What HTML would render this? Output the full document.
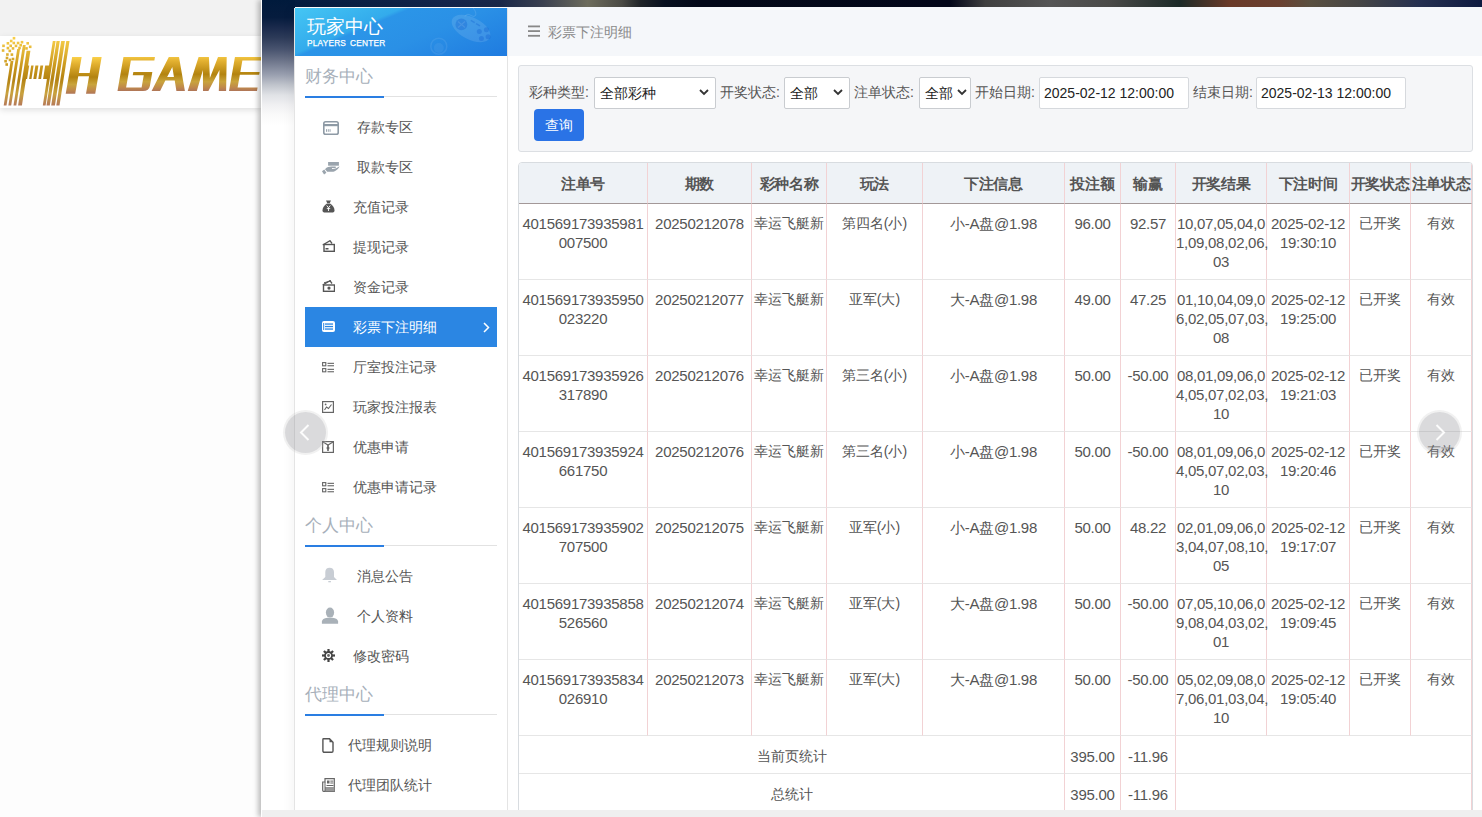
<!DOCTYPE html>
<html><head><meta charset="utf-8">
<style>
*{box-sizing:border-box;margin:0;padding:0}
html,body{width:1482px;height:817px;overflow:hidden;background:#fdfdfd;font-family:"Liberation Sans",sans-serif;color:#555}
.abs{position:absolute}
#topbg{left:0;top:0;width:261px;height:36px;background:#f2f2f2}
#logo{left:0;top:36px;width:261px;height:72px;background:#fff;box-shadow:0 2px 6px rgba(0,0,0,.12)}
#logosvg{left:0;top:0;width:261px;height:120px}
#panel{left:261px;top:0;width:1221px;height:817px;background:#fff;box-shadow:-3px 0 5px rgba(0,0,0,.25)}
#space{left:262px;top:0;width:1220px;height:7px;background:linear-gradient(90deg,#001a3c 0%,#14244a 15%,#1a2848 19.5%,#3a4050 23%,#6d6c5c 26.7%,#4a4a44 29.5%,#202428 31%,#081020 33%,#020818 36%,#03071a 56.4%,#404040 59.3%,#555555 64.6%,#4a4a48 69.5%,#1c2a28 75.2%,#6a3a28 79.3%,#6a4030 83.4%,#5a5040 85.9%,#454545 90%,#253050 94.9%,#0e1a40 100%)}
#lgrad{left:262px;top:0;width:33px;height:125px;background:linear-gradient(180deg,#001a3c 0%,#061c3e 14%,#1a2a4c 22%,#2c3a58 30%,#4a5570 40%,#6a7288 48%,#9aa0b0 60%,#c0c4cc 68%,#e0e2e6 76%,#f0f0f2 84%,#fafafa 92%,#fff 100%)}
#side{left:294px;top:8px;width:214px;height:809px;background:#fff;border-left:1px solid #e4e4e4;border-right:1px solid #e4e4e4;box-shadow:-4px 0 10px rgba(0,0,0,.035)}
#sidehead{left:295px;top:8px;width:212px;height:48px;overflow:hidden;background:linear-gradient(157deg,#45c6f4 0%,#33abec 33%,#2b95e8 36%,#2a90e6 60%,#1f7be0 100%)}
#sidehead .t1{position:absolute;left:12px;top:8px;font-size:19px;color:#fff;line-height:22px;letter-spacing:0px}
#sidehead .t2{position:absolute;left:12px;top:30px;font-size:8.3px;color:#fff;font-weight:normal;line-height:10px;letter-spacing:0.2px;word-spacing:1.5px;-webkit-text-stroke:0.25px #fff}
#crumb{left:508px;top:7px;width:974px;height:49px;background:#f5f7fa}
#crumb .txt{position:absolute;left:40px;top:16px;font-size:14px;color:#8a8a8a;line-height:18px}
#bottombar{left:262px;top:810px;width:1220px;height:7px;background:#efefef}
.sec{position:absolute;left:305px;width:192px;height:31px;border-bottom:1px solid #e2e2e2;font-size:17px;color:#a7b0ba;line-height:21px}
.sec:after{content:"";position:absolute;left:0;bottom:-2px;width:79px;height:2px;background:#2a7ee2}
.mi{position:absolute;left:305px;width:192px;height:40px;font-size:14px;color:#555;line-height:40px}
.mi .ic{position:absolute;left:17px;top:13px;width:14px;height:14px}
.mi .tx{position:absolute;top:0}
.mi.act{background:#2b86e3;color:#fff}
#filter{left:518px;top:65px;width:955px;height:87px;background:#f5f6f8;border:1px solid #dcdfe3;border-radius:3px}
.lbl{position:absolute;top:83px;font-size:14px;color:#555;line-height:18px}
.sel{position:absolute;top:77px;height:32px;background:#fff;border:1px solid #c9ccd0;border-radius:2px;font-size:14px;color:#222;line-height:30px;padding-left:5px}
.sel svg{position:absolute;right:6px;top:11px}
.inp{position:absolute;top:77px;height:32px;width:150px;background:#fff;border:1px solid #d6d9dd;border-radius:2px;font-size:14px;color:#222;line-height:30px;padding-left:4px}
#btn{left:534px;top:109px;width:50px;height:32px;background:#2a73e6;border-radius:4px;color:#fff;font-size:14px;line-height:32px;text-align:center}
#tw{left:518px;top:162px;width:955px;height:655px;border:1px solid #d8dce0;border-radius:4px 4px 0 0;overflow:hidden}
#tbl{position:absolute;left:0;top:0;width:953px;border-collapse:separate;border-spacing:0;table-layout:fixed;font-size:15px;letter-spacing:-0.27px;color:#555}
#tbl th{height:41px;background:#eef2f6;font-weight:bold;color:#555;font-size:15px;border-right:1px solid #f2d2d4;border-bottom:1px solid #a39898;text-align:center;vertical-align:middle;white-space:nowrap;padding:2px 0 0 0}
#tbl td{height:76px;border-right:1px solid #f2d2d4;border-bottom:1px solid #e6e6e6;text-align:center;vertical-align:top;padding:10px 0 0 0;line-height:19px;white-space:nowrap}
#tbl td.c{font-size:14px;letter-spacing:0}
#tbl tr.sum td{height:38px;vertical-align:middle;padding:3px 0 0 0}
#tbl tr.sum td.c{padding-top:4px}
.arrow{position:absolute;width:41px;height:41px;border-radius:50%;background:rgba(140,140,145,.32);box-shadow:0 0 0 2px rgba(200,200,200,.25)}
.arrow svg{position:absolute;left:0;top:0}
</style></head><body>
<div class="abs" id="topbg"></div>
<div class="abs" id="logo"></div>
<svg class="abs" id="logosvg" viewBox="0 0 261 120">
<defs><linearGradient id="gold" x1="0" y1="0" x2="0" y2="1" gradientUnits="objectBoundingBox">
<stop offset="0" stop-color="#fbd24c"/><stop offset="0.45" stop-color="#c8961c"/><stop offset="0.62" stop-color="#b48312"/><stop offset="0.8" stop-color="#c9a23e"/><stop offset="1" stop-color="#b5785a"/></linearGradient>
<linearGradient id="gold2" x1="0" y1="36" x2="0" y2="106" gradientUnits="userSpaceOnUse">
<stop offset="0" stop-color="#fbd24c"/><stop offset="0.45" stop-color="#c8961c"/><stop offset="0.62" stop-color="#b48312"/><stop offset="0.82" stop-color="#c9a23e"/><stop offset="1" stop-color="#b5785a"/></linearGradient>
<linearGradient id="gold3" x1="0" y1="-37" x2="0" y2="0" gradientUnits="userSpaceOnUse">
<stop offset="0" stop-color="#fcd24a"/><stop offset="0.2" stop-color="#e2b030"/><stop offset="0.55" stop-color="#b3830f"/><stop offset="0.75" stop-color="#c9a43c"/><stop offset="0.9" stop-color="#c08a4a"/><stop offset="1" stop-color="#b07658"/></linearGradient>
</defs>
<g fill="url(#gold2)">
<rect x="12.7" y="36.9" width="2.6" height="2.6"/><rect x="9.9" y="39.7" width="2.6" height="2.6"/><rect x="6.6" y="42.0" width="2.6" height="2.6"/><rect x="12.5" y="41.7" width="2.6" height="2.6"/><rect x="16.8" y="41.7" width="2.6" height="2.6"/><rect x="20.7" y="40.9" width="2.6" height="2.6"/><rect x="26.4" y="42.0" width="2.6" height="2.6"/><rect x="2.2" y="44.5" width="2.6" height="2.6"/><rect x="9.4" y="44.5" width="2.6" height="2.6"/><rect x="14.7" y="44.6" width="2.6" height="2.6"/><rect x="19.4" y="43.9" width="2.6" height="2.6"/><rect x="28.9" y="45.5" width="2.6" height="2.6"/><rect x="6.6" y="46.8" width="2.6" height="2.6"/><rect x="11.7" y="47.1" width="2.6" height="2.6"/><rect x="18.2" y="46.7" width="2.6" height="2.6"/><rect x="25.2" y="47.1" width="2.6" height="2.6"/><rect x="1.8" y="49.2" width="2.6" height="2.6"/><rect x="8.5" y="49.6" width="2.6" height="2.6"/><rect x="6.1" y="53.2" width="2.6" height="2.6"/><rect x="10.6" y="53.3" width="2.6" height="2.6"/><rect x="5.7" y="56.7" width="2.6" height="2.6"/><rect x="11.7" y="57.7" width="2.6" height="2.6"/><rect x="8.7" y="58.6" width="2.6" height="2.6"/><rect x="4.3" y="59.9" width="2.6" height="2.6"/><rect x="5.4" y="63.2" width="2.6" height="2.6"/>
<polygon points="3.7,105.6 6.5,105.6 13.4,61 10.6,61"/><polygon points="8.4,105.6 11.2,105.6 20.0,48.9 17.2,48.9"/><polygon points="13.5,105.6 16.3,105.6 25.7,45 22.9,45"/><polygon points="18.1,105.6 21.9,105.6 30.4,50.7 26.6,50.7"/><polygon points="42.8,105.6 45.6,105.6 55.6,41 52.8,41"/><polygon points="46.5,105.6 49.8,105.6 59.8,41 56.5,41"/><polygon points="51.2,105.6 54.9,105.6 64.9,41 61.2,41"/><polygon points="56.3,105.6 59.5,105.6 69.5,41 66.3,41"/><polygon points="24.5,79 27.1,79 29.2,65.6 26.6,65.6"/><polygon points="29.1,79 31.5,79 33.6,65.6 31.2,65.6"/><polygon points="33.3,79 36.3,79 38.4,65.6 35.4,65.6"/><polygon points="38.3,79 41.1,79 43.2,65.6 40.4,65.6"/><polygon points="43.1,79 48.2,79 50.3,65.6 45.2,65.6"/>
</g>
<g fill="url(#gold3)">
<path transform="translate(0,93.7) skewX(-10)" d="M65.7,0 V-36.6 H75.2 V-20.7 H86 V-36.6 H95.2 V0 H86 V-17.4 H75.2 V0 Z"/>
<g transform="translate(0,90.9) skewX(-10)">
<path d="M117.5,0 V-33.8 H149 V-30.4 H125.5 V-3.4 H141 V-15.6 H130 V-19 H149 V-5 Q149,0 143,0 Z"/>
<path fill-rule="evenodd" d="M151.6,0 L162.85,-33.8 L173.05,-33.8 L184.9,0 H176.4 L172.9,-10.4 H163.5 L160.1,0 Z M164.7,-13.9 H171.5 L168.1,-23.9 Z"/>
<path d="M187.7,0 L192.65,-33.8 L202.95,-33.8 L207.6,-13 L212.05,-33.8 L220.75,-33.8 L226.1,0 L218.8,0 L215.8,-21 L208.4,0 L203,0 L199.2,-21 L196.8,0 Z"/>
<path d="M229,0 V-33.8 H262 V-30.4 H237 V-19 H256.3 V-16.2 H237 V-3.4 H257 V0 Z"/>
</g>
</g>
</svg>
<div class="abs" id="panel"></div>
<div class="abs" id="space"></div>
<div class="abs" id="lgrad"></div>
<div class="abs" id="side"></div>
<div class="abs" id="sidehead">
<svg class="abs" style="left:120px;top:0" width="92" height="48" viewBox="0 0 92 48">
<g fill="#ffffff" opacity="0.11"><ellipse cx="56" cy="20.5" rx="21" ry="11" transform="rotate(27 56 20.5)"/></g><circle cx="23.8" cy="38.2" r="8" fill="none" stroke="#ffffff" stroke-width="1.5" opacity="0.08"/>
<path d="M50,8.5 C53,3 57,10 60,8 C62,6 60,2 58,0" stroke="#ffffff" stroke-width="1" fill="none" opacity="0.12"/>
<g fill="#0a5ad0" opacity="0.3"><circle cx="46.4" cy="16.4" r="5.9"/><circle cx="71.4" cy="21.7" r="2.5"/><circle cx="64.3" cy="23.5" r="2.5"/><circle cx="73.1" cy="28.8" r="2.5"/><circle cx="66.4" cy="30.5" r="2.5"/><rect x="55.5" y="12.8" width="4.5" height="1.5" transform="rotate(30 57.8 13.5)"/><rect x="60.8" y="16" width="4.5" height="1.5" transform="rotate(30 63.1 16.7)"/></g>
<path d="M43,13.5 L50,19.5 M50,13.5 L43,19.5" stroke="#ffffff" stroke-width="1.2" opacity="0.1"/>
<circle cx="23.8" cy="40" r="5" fill="#ffffff" opacity="0.06"/>
</svg>
<div class="t1">玩家中心</div>
<div class="t2">PLAYERS CENTER</div>
</div>
<div class="abs" id="crumb"><svg class="abs" style="left:20px;top:18px" width="12" height="12" viewBox="0 0 12 12"><rect x="0" y="0.5" width="12" height="1.8" fill="#888"/><rect x="0" y="5.2" width="12" height="1.8" fill="#888"/><rect x="0" y="9.9" width="12" height="1.8" fill="#888"/></svg><div class="txt">彩票下注明细</div></div>

<!-- sidebar menu -->
<div class="sec" style="top:66px">财务中心</div>
<div class="mi" style="top:107px"><svg class="ic" style="left:18px;top:14px;width:16px;height:14px" viewBox="0 0 16 14"><rect x="0.8" y="0.8" width="14.4" height="12.4" rx="1.8" fill="none" stroke="#8e9aa5" stroke-width="1.6"/><rect x="0.8" y="3" width="14.4" height="2.2" fill="#8e9aa5"/><rect x="3" y="8.2" width="0.9" height="2.6" fill="#8e9aa5"/><rect x="4.8" y="8.2" width="0.9" height="2.6" fill="#8e9aa5"/><rect x="6.6" y="8.2" width="0.9" height="2.6" fill="#8e9aa5"/></svg><span class="tx" style="left:52px">存款专区</span></div>
<div class="mi" style="top:147px"><svg class="ic" style="left:17px;top:14px;width:18px;height:14px" viewBox="0 0 18 14"><rect x="6.1" y="1" width="10.8" height="3.7" fill="#9aa4ad"/><polygon points="0,10.3 2.3,8.5 4.4,11.7 2.1,13.5" fill="#9aa4ad"/><path d="M3,8.2 C5,6.2 7,5.6 9.5,5.6 L13.3,5.6 C14.2,5.6 14.2,7.1 13.3,7.1 L9.8,7.1 L10.2,7.9 C13,7.9 15.5,6.8 17.5,5.2 C16.8,7.6 14,10.6 10,10.8 L5.2,10.8 Z" fill="#9aa4ad"/></svg><span class="tx" style="left:52px">取款专区</span></div>
<div class="mi" style="top:187px"><svg class="ic" style="left:17px;top:13px;width:13px;height:13px" viewBox="0 0 13 13"><path d="M4,0.5 L9,0.5 L7.8,3 L5.2,3 Z" fill="#555"/><path d="M5,3.5 L8,3.5 C11,5 12.5,8 12.5,10.5 C12.5,12 11.5,12.5 10,12.5 L3,12.5 C1.5,12.5 0.5,12 0.5,10.5 C0.5,8 2,5 5,3.5 Z" fill="#555"/><path d="M4.7,5.5 L6.5,7.8 L8.3,5.5 M6.5,7.8 V11 M4.8,8.6 H8.2" stroke="#fff" stroke-width="0.9" fill="none"/></svg><span class="tx" style="left:48px">充值记录</span></div>
<div class="mi" style="top:227px"><svg class="ic" style="left:17px;top:13px;width:13px;height:12px" viewBox="0 0 13 12"><path d="M0.7,5 L8,0.7 L10,3.5" stroke="#555" stroke-width="1.3" fill="none"/><rect x="2" y="4.5" width="10.3" height="6.8" fill="none" stroke="#555" stroke-width="1.4"/><rect x="3.5" y="8" width="3" height="1.5" fill="#555"/></svg><span class="tx" style="left:48px">提现记录</span></div>
<div class="mi" style="top:267px"><svg class="ic" style="left:17px;top:13px;width:13px;height:12px" viewBox="0 0 13 12"><path d="M0.7,5 L8,0.7 L10,3.5" stroke="#555" stroke-width="1.3" fill="none"/><path d="M2,2.8 L9,0.8" stroke="#555" stroke-width="1" fill="none"/><rect x="1.5" y="5" width="11" height="6.3" fill="none" stroke="#555" stroke-width="1.4"/><circle cx="7" cy="8.1" r="1.6" fill="#555"/></svg><span class="tx" style="left:48px">资金记录</span></div>
<div class="mi act" style="top:307px"><svg class="ic" style="left:17px;top:14px;width:13px;height:11px" viewBox="0 0 13 11"><rect x="0" y="0" width="13" height="11" rx="2" fill="#fff"/><rect x="3" y="2.4" width="8" height="1.3" fill="#2b86e3"/><rect x="3" y="4.9" width="8" height="1.3" fill="#2b86e3"/><rect x="3" y="7.4" width="8" height="1.3" fill="#2b86e3"/><rect x="1.2" y="2" width="1" height="7" fill="#2b86e3"/></svg><span class="tx" style="left:48px">彩票下注明细</span><svg class="abs" style="left:178px;top:15px" width="7" height="11" viewBox="0 0 7 11"><path d="M1,1 L5.5,5.5 L1,10" stroke="#fff" stroke-width="1.5" fill="none"/></svg></div>
<div class="mi" style="top:347px"><svg class="ic" style="left:17px;top:15px;width:12px;height:11px" viewBox="0 0 12 11"><rect x="0.6" y="0.6" width="3.2" height="3.2" fill="none" stroke="#666" stroke-width="1.1"/><rect x="0.6" y="6.6" width="3.2" height="3.2" fill="none" stroke="#666" stroke-width="1.1"/><rect x="5.5" y="0.8" width="6.5" height="1.1" fill="#666"/><rect x="5.5" y="3.2" width="6.5" height="1.1" fill="#666"/><rect x="5.5" y="6.8" width="6.5" height="1.1" fill="#666"/><rect x="5.5" y="9.2" width="6.5" height="1.1" fill="#666"/></svg><span class="tx" style="left:48px">厅室投注记录</span></div>
<div class="mi" style="top:387px"><svg class="ic" style="left:17px;top:14px;width:12px;height:12px" viewBox="0 0 12 12"><rect x="0.6" y="0.6" width="10.8" height="10.8" fill="none" stroke="#666" stroke-width="1.2"/><path d="M2.5,9 L4.5,6 L6.5,7.5 L9.5,3.5" stroke="#666" stroke-width="1.1" fill="none"/><circle cx="3.6" cy="3.4" r="0.9" fill="#666"/></svg><span class="tx" style="left:48px">玩家投注报表</span></div>
<div class="mi" style="top:427px"><svg class="ic" style="left:17px;top:14px;width:12px;height:12px" viewBox="0 0 12 12"><rect x="0.6" y="0.6" width="10.8" height="10.8" fill="none" stroke="#666" stroke-width="1.2"/><path d="M1,1 L6,4 L11,1" stroke="#666" stroke-width="1.1" fill="none"/><path d="M6,4 V10" stroke="#666" stroke-width="1.6"/><circle cx="6" cy="7" r="1.5" fill="#666"/></svg><span class="tx" style="left:48px">优惠申请</span></div>
<div class="mi" style="top:467px"><svg class="ic" style="left:17px;top:15px;width:12px;height:11px" viewBox="0 0 12 11"><rect x="0.6" y="0.6" width="3.2" height="3.2" fill="none" stroke="#666" stroke-width="1.1"/><rect x="0.6" y="6.6" width="3.2" height="3.2" fill="none" stroke="#666" stroke-width="1.1"/><rect x="5.5" y="0.8" width="6.5" height="1.1" fill="#666"/><rect x="5.5" y="3.2" width="6.5" height="1.1" fill="#666"/><rect x="5.5" y="6.8" width="6.5" height="1.1" fill="#666"/><rect x="5.5" y="9.2" width="6.5" height="1.1" fill="#666"/></svg><span class="tx" style="left:48px">优惠申请记录</span></div>
<div class="sec" style="top:515px">个人中心</div>
<div class="mi" style="top:556px"><svg class="ic" style="left:16px;top:11px;width:17px;height:16px" viewBox="0 0 17 16"><path d="M1.1,13 L4.3,9.9 V5 C4.3,2.3 6,0.8 8.6,0.8 C11.2,0.8 13,2.3 13,5 V9.9 L16,13 Z" fill="#c8cdd4"/><rect x="7.3" y="14" width="2.6" height="1.3" fill="#c8cdd4"/></svg><span class="tx" style="left:52px">消息公告</span></div>
<div class="mi" style="top:596px"><svg class="ic" style="left:16px;top:11px;width:18px;height:17px" viewBox="0 0 18 17"><ellipse cx="9" cy="5.6" rx="4.1" ry="5" fill="#a9b1b8"/><path d="M0.9,16.8 V14.6 C0.9,12.5 3,11.2 6.5,10.8 L11.5,10.8 C15,11.2 17.1,12.5 17.1,14.6 V16.8 Z" fill="#a9b1b8"/></svg><span class="tx" style="left:52px">个人资料</span></div>
<div class="mi" style="top:636px"><svg class="ic" style="left:17px;top:13px;width:13px;height:13px" viewBox="0 0 13 13"><g fill="#444"><circle cx="6.5" cy="6.5" r="4.4"/><rect x="5.4" y="0" width="2.2" height="3" transform="rotate(0 6.5 6.5)"/><rect x="5.4" y="0" width="2.2" height="3" transform="rotate(45 6.5 6.5)"/><rect x="5.4" y="0" width="2.2" height="3" transform="rotate(90 6.5 6.5)"/><rect x="5.4" y="0" width="2.2" height="3" transform="rotate(135 6.5 6.5)"/><rect x="5.4" y="0" width="2.2" height="3" transform="rotate(180 6.5 6.5)"/><rect x="5.4" y="0" width="2.2" height="3" transform="rotate(225 6.5 6.5)"/><rect x="5.4" y="0" width="2.2" height="3" transform="rotate(270 6.5 6.5)"/><rect x="5.4" y="0" width="2.2" height="3" transform="rotate(315 6.5 6.5)"/></g><circle cx="6.5" cy="6.5" r="2.6" fill="#fff"/><circle cx="6.5" cy="6.5" r="1.4" fill="#666"/></svg><span class="tx" style="left:48px">修改密码</span></div>
<div class="sec" style="top:684px">代理中心</div>
<div class="mi" style="top:725px"><svg class="ic" style="left:17px;top:13px;width:12px;height:15px" viewBox="0 0 12 15"><path d="M1.5,0.8 L7.5,0.8 L11,4.3 L11,13 C11,13.7 10.5,14.2 9.8,14.2 L2.2,14.2 C1.5,14.2 0.9,13.7 0.9,13 L0.9,1.5 C0.9,1.1 1.1,0.8 1.5,0.8 Z" fill="none" stroke="#555" stroke-width="1.4"/><path d="M7.5,0.8 V4.3 H11" fill="#555"/></svg><span class="tx" style="left:43px">代理规则说明</span></div>
<div class="mi" style="top:765px"><svg class="ic" style="left:17px;top:13px;width:13px;height:14px" viewBox="0 0 13 14"><path d="M3,0.7 H12.3 V13.3 H1.5 C0.9,13.3 0.7,12.8 0.7,12.3 V4 H3 Z" fill="none" stroke="#666" stroke-width="1.2"/><rect x="5" y="2.5" width="2.5" height="3" fill="#666"/><rect x="8.3" y="2.6" width="3" height="1" fill="#666"/><rect x="8.3" y="4.5" width="3" height="1" fill="#666"/><rect x="4.5" y="7" width="7" height="1" fill="#666"/><rect x="3" y="9" width="9.3" height="4.3" fill="#999"/><path d="M3,4 V13" stroke="#666" stroke-width="1"/></svg><span class="tx" style="left:43px">代理团队统计</span></div>

<!-- filter -->
<div class="abs" id="filter"></div>
<div class="lbl" style="left:529px">彩种类型:</div>
<div class="sel" style="left:594px;width:122px">全部彩种<svg width="10" height="7" viewBox="0 0 10 7"><path d="M1,1 L5,5 L9,1" stroke="#333" stroke-width="1.8" fill="none"/></svg></div>
<div class="lbl" style="left:720px">开奖状态:</div>
<div class="sel" style="left:784px;width:66px">全部<svg width="10" height="7" viewBox="0 0 10 7"><path d="M1,1 L5,5 L9,1" stroke="#333" stroke-width="1.8" fill="none"/></svg></div>
<div class="lbl" style="left:854px">注单状态:</div>
<div class="sel" style="left:919px;width:52px">全部<svg width="10" height="7" viewBox="0 0 10 7" style="right:3px"><path d="M1,1 L5,5 L9,1" stroke="#333" stroke-width="1.8" fill="none"/></svg></div>
<div class="lbl" style="left:975px">开始日期:</div>
<div class="inp" style="left:1039px">2025-02-12 12:00:00</div>
<div class="lbl" style="left:1193px">结束日期:</div>
<div class="inp" style="left:1256px">2025-02-13 12:00:00</div>
<div class="abs" id="btn">查询</div>

<!-- table -->
<div class="abs" id="tw"><table id="tbl">
<colgroup><col style="width:129px"><col style="width:104px"><col style="width:75px"><col style="width:96px"><col style="width:142px"><col style="width:56px"><col style="width:55px"><col style="width:91px"><col style="width:83px"><col style="width:61px"><col style="width:61px"></colgroup>
<tr><th>注单号</th><th>期数</th><th>彩种名称</th><th>玩法</th><th>下注信息</th><th>投注额</th><th>输赢</th><th>开奖结果</th><th>下注时间</th><th>开奖状态</th><th>注单状态</th></tr>
<tr><td>401569173935981<br>007500</td><td>20250212078</td><td class="c">幸运飞艇新</td><td class="c">第四名(小)</td><td>小-A盘@1.98</td><td>96.00</td><td>92.57</td><td>10,07,05,04,0<br>1,09,08,02,06,<br>03</td><td>2025-02-12<br>19:30:10</td><td class="c">已开奖</td><td class="c">有效</td></tr>
<tr><td>401569173935950<br>023220</td><td>20250212077</td><td class="c">幸运飞艇新</td><td class="c">亚军(大)</td><td>大-A盘@1.98</td><td>49.00</td><td>47.25</td><td>01,10,04,09,0<br>6,02,05,07,03,<br>08</td><td>2025-02-12<br>19:25:00</td><td class="c">已开奖</td><td class="c">有效</td></tr>
<tr><td>401569173935926<br>317890</td><td>20250212076</td><td class="c">幸运飞艇新</td><td class="c">第三名(小)</td><td>小-A盘@1.98</td><td>50.00</td><td>-50.00</td><td>08,01,09,06,0<br>4,05,07,02,03,<br>10</td><td>2025-02-12<br>19:21:03</td><td class="c">已开奖</td><td class="c">有效</td></tr>
<tr><td>401569173935924<br>661750</td><td>20250212076</td><td class="c">幸运飞艇新</td><td class="c">第三名(小)</td><td>小-A盘@1.98</td><td>50.00</td><td>-50.00</td><td>08,01,09,06,0<br>4,05,07,02,03,<br>10</td><td>2025-02-12<br>19:20:46</td><td class="c">已开奖</td><td class="c">有效</td></tr>
<tr><td>401569173935902<br>707500</td><td>20250212075</td><td class="c">幸运飞艇新</td><td class="c">亚军(小)</td><td>小-A盘@1.98</td><td>50.00</td><td>48.22</td><td>02,01,09,06,0<br>3,04,07,08,10,<br>05</td><td>2025-02-12<br>19:17:07</td><td class="c">已开奖</td><td class="c">有效</td></tr>
<tr><td>401569173935858<br>526560</td><td>20250212074</td><td class="c">幸运飞艇新</td><td class="c">亚军(大)</td><td>大-A盘@1.98</td><td>50.00</td><td>-50.00</td><td>07,05,10,06,0<br>9,08,04,03,02,<br>01</td><td>2025-02-12<br>19:09:45</td><td class="c">已开奖</td><td class="c">有效</td></tr>
<tr><td>401569173935834<br>026910</td><td>20250212073</td><td class="c">幸运飞艇新</td><td class="c">亚军(大)</td><td>大-A盘@1.98</td><td>50.00</td><td>-50.00</td><td>05,02,09,08,0<br>7,06,01,03,04,<br>10</td><td>2025-02-12<br>19:05:40</td><td class="c">已开奖</td><td class="c">有效</td></tr>
<tr class="sum"><td class="c" colspan="5">当前页统计</td><td>395.00</td><td>-11.96</td><td colspan="4"></td></tr>
<tr class="sum"><td class="c" colspan="5">总统计</td><td>395.00</td><td>-11.96</td><td colspan="4"></td></tr>
</table></div>
<div class="abs" id="bottombar"></div>
<div class="arrow" style="left:285px;top:412px"><svg width="41" height="41" viewBox="0 0 41 41"><path d="M23.5,13 L16,20.5 L23.5,28" stroke="#fff" stroke-width="2" fill="none" opacity="0.9"/></svg></div>
<div class="arrow" style="left:1419px;top:412px"><svg width="41" height="41" viewBox="0 0 41 41"><path d="M17.5,13 L25,20.5 L17.5,28" stroke="#fff" stroke-width="2" fill="none" opacity="0.9"/></svg></div>
</body></html>
